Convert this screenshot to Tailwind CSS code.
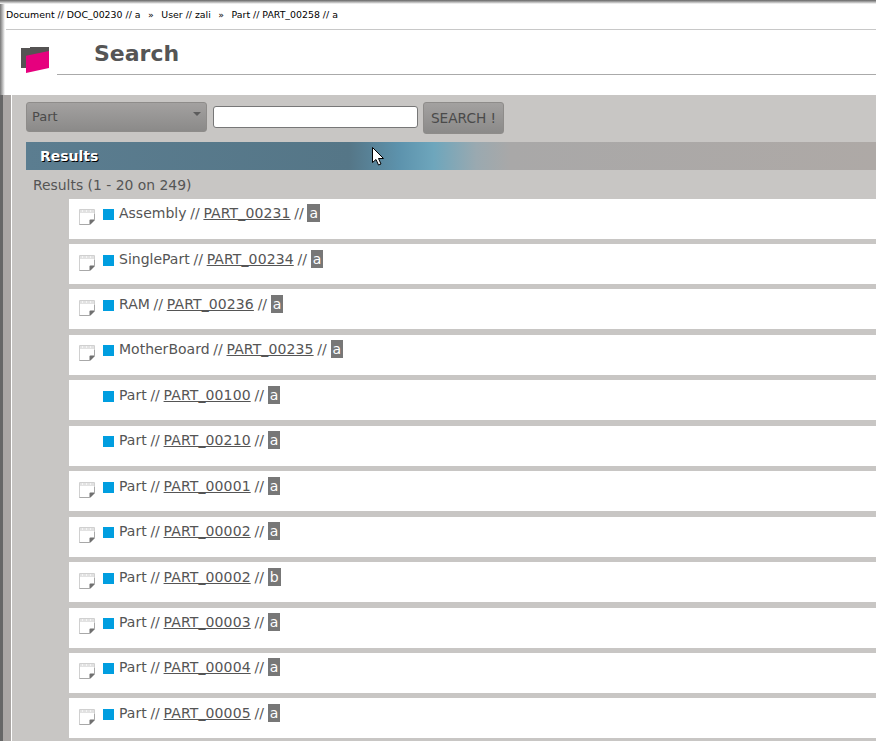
<!DOCTYPE html>
<html lang="en">
<head>
  <meta charset="UTF-8" />
  <title>Search</title>
  <script src="https://cdn.jsdelivr.net/npm/@tailwindcss/browser@4"></script>
</head>
<body class="bg-white font-['DejaVu_Sans',sans-serif] overflow-hidden">
  <div class="relative h-[741px] w-[876px] overflow-hidden">
    <div class="h-[4px] bg-gradient-to-b from-[#666666] to-white"></div>
    <div class="flex">
      <div class="w-[5px] bg-gradient-to-r from-[#777777] to-white"></div>
      <div class="flex-1 min-w-0">
        <!-- breadcrumb -->
        <div class="ml-[1px] flex h-[26px] items-center gap-[7.5px] border-b border-[#c8c8c8] pb-[2px] text-[9.4px] text-black whitespace-nowrap">
          <span>Document // DOC_00230 // a</span><span>»</span><span>User // zali</span><span>»</span><span>Part // PART_00258 // a</span>
        </div>
        <!-- title -->
        <div class="flex h-[65px]">
          <div class="flex w-[52px] pl-[15px] pt-[15px]">
            <svg width="32" height="30" viewBox="0 0 32 30">
              <path d="M1 3h9V2h19v10L6 23H1z" fill="#555353"/>
              <path d="M6 10.700L29 6V23L6 28z" fill="#e6007e"/>
            </svg>
          </div>
          <div class="flex-1">
            <div class="h-[45px] border-b border-[#aaaaaa] pl-[37px] pt-[9px] text-[22px] leading-[30px] font-bold text-[#555555]">Search</div>
          </div>
        </div>
      </div>
    </div>
    <div class="flex h-[646px]">
      <div class="w-[3px] bg-[#666666]"></div>
      <div class="w-[8px] bg-[#aaa6a4]"></div>
      <div class="w-[1px] bg-white"></div>
      <div class="flex-1 min-w-0 bg-[#c8c6c4] pl-[14px] pt-[7px]">
        <!-- search form -->
        <div class="flex items-start">
          <div class="flex h-[30px] w-[181px] items-center justify-between rounded-[3px] border border-[#8e8c8a] bg-gradient-to-b from-[#a3a1a0] to-[#8b8a89] pl-[5px] pr-[5px] text-[13px] text-[#4a4a4a]">
            <span>Part</span>
            <span class="mb-[7px] h-0 w-0 border-x-[4px] border-t-[4px] border-x-transparent border-t-[#5c5c5c]"></span>
          </div>
          <input type="text" class="ml-[6px] mt-[4px] h-[22px] w-[205px] rounded-[3px] border border-[#777777] bg-white" />
          <button class="ml-[5px] h-[32px] w-[81px] rounded-[3px] border border-[#8e8c8a] bg-gradient-to-b from-[#a3a1a0] to-[#8b8a89] text-[13.7px] text-[#4a4a4a]">SEARCH !</button>
        </div>
        <!-- results bar -->
        <div class="mt-[8px] flex h-[28px] items-center bg-[linear-gradient(90deg,#5b7d90_0%,#557687_38%,#5d93ad_44%,#6ea6bc_48%,#9aa9b0_53%,#a9a8a8_57%,#aea9a6_100%)] pl-[14px] text-[14px] font-bold text-white [text-shadow:1px_1px_0_#000]">Results</div>
        <div class="ml-[7px] flex h-[28.6px] items-center pt-[2px] text-[13.9px] text-[#555555]">Results (1 - 20 on 249)</div>
        <!-- result rows -->
        <div class="ml-[43px]">
          <div class="mb-[5.44px] flex h-[40px] bg-white pl-[10px] pt-[5.48px] text-[14px] leading-[18px] text-[#555555] [word-spacing:-0.7px]">
            <span class="mr-[8px] mt-[5px] block h-[16px] w-[16px]"><svg width="16" height="16" viewBox="0 0 16 16"><path d="M0.5 0.500h15v10l-5 5h-10z" fill="#fff" stroke="#d0d0d0"/><path d="M1 1h14v3H1z" fill="#e2e2e2"/><path d="M3 1h1v2H3zM7 1h1v2H7zM11 1h1v2h-1z" fill="#f4f4f4"/><path d="M0.500 15.500h10M15.500 5v5.500" stroke="#a8a8a8" fill="none"/><path d="M15.500 10.500v1l-4 4h-1v-4a1 1 0 0 1 1-1z" fill="#707070"/></svg></span>
            <span class="mr-[5px] mt-[5px] block h-[11px] w-[11px] bg-[#009ee0]"></span>
            <span>Assembly // <u class="tracking-[0.12px]">PART_00231</u> // <span class="inline-block h-[18px] bg-[#777777] px-[2px] text-white">a</span></span>
          </div>
          <div class="mb-[5.44px] flex h-[40px] bg-white pl-[10px] pt-[5.48px] text-[14px] leading-[18px] text-[#555555] [word-spacing:-0.7px]">
            <span class="mr-[8px] mt-[5px] block h-[16px] w-[16px]"><svg width="16" height="16" viewBox="0 0 16 16"><path d="M0.5 0.500h15v10l-5 5h-10z" fill="#fff" stroke="#d0d0d0"/><path d="M1 1h14v3H1z" fill="#e2e2e2"/><path d="M3 1h1v2H3zM7 1h1v2H7zM11 1h1v2h-1z" fill="#f4f4f4"/><path d="M0.500 15.500h10M15.500 5v5.500" stroke="#a8a8a8" fill="none"/><path d="M15.500 10.500v1l-4 4h-1v-4a1 1 0 0 1 1-1z" fill="#707070"/></svg></span>
            <span class="mr-[5px] mt-[5px] block h-[11px] w-[11px] bg-[#009ee0]"></span>
            <span>SinglePart // <u class="tracking-[0.12px]">PART_00234</u> // <span class="inline-block h-[18px] bg-[#777777] px-[2px] text-white">a</span></span>
          </div>
          <div class="mb-[5.44px] flex h-[40px] bg-white pl-[10px] pt-[5.48px] text-[14px] leading-[18px] text-[#555555] [word-spacing:-0.7px]">
            <span class="mr-[8px] mt-[5px] block h-[16px] w-[16px]"><svg width="16" height="16" viewBox="0 0 16 16"><path d="M0.5 0.500h15v10l-5 5h-10z" fill="#fff" stroke="#d0d0d0"/><path d="M1 1h14v3H1z" fill="#e2e2e2"/><path d="M3 1h1v2H3zM7 1h1v2H7zM11 1h1v2h-1z" fill="#f4f4f4"/><path d="M0.500 15.500h10M15.500 5v5.500" stroke="#a8a8a8" fill="none"/><path d="M15.500 10.500v1l-4 4h-1v-4a1 1 0 0 1 1-1z" fill="#707070"/></svg></span>
            <span class="mr-[5px] mt-[5px] block h-[11px] w-[11px] bg-[#009ee0]"></span>
            <span>RAM // <u class="tracking-[0.12px]">PART_00236</u> // <span class="inline-block h-[18px] bg-[#777777] px-[2px] text-white">a</span></span>
          </div>
          <div class="mb-[5.44px] flex h-[40px] bg-white pl-[10px] pt-[5.48px] text-[14px] leading-[18px] text-[#555555] [word-spacing:-0.7px]">
            <span class="mr-[8px] mt-[5px] block h-[16px] w-[16px]"><svg width="16" height="16" viewBox="0 0 16 16"><path d="M0.5 0.500h15v10l-5 5h-10z" fill="#fff" stroke="#d0d0d0"/><path d="M1 1h14v3H1z" fill="#e2e2e2"/><path d="M3 1h1v2H3zM7 1h1v2H7zM11 1h1v2h-1z" fill="#f4f4f4"/><path d="M0.500 15.500h10M15.500 5v5.500" stroke="#a8a8a8" fill="none"/><path d="M15.500 10.500v1l-4 4h-1v-4a1 1 0 0 1 1-1z" fill="#707070"/></svg></span>
            <span class="mr-[5px] mt-[5px] block h-[11px] w-[11px] bg-[#009ee0]"></span>
            <span>MotherBoard // <u class="tracking-[0.12px]">PART_00235</u> // <span class="inline-block h-[18px] bg-[#777777] px-[2px] text-white">a</span></span>
          </div>
          <div class="mb-[5.44px] flex h-[40px] bg-white pl-[10px] pt-[5.48px] text-[14px] leading-[18px] text-[#555555] [word-spacing:-0.7px]">
            <span class="mr-[8px] mt-[5px] block h-[16px] w-[16px]"></span>
            <span class="mr-[5px] mt-[5px] block h-[11px] w-[11px] bg-[#009ee0]"></span>
            <span>Part // <u class="tracking-[0.12px]">PART_00100</u> // <span class="inline-block h-[18px] bg-[#777777] px-[2px] text-white">a</span></span>
          </div>
          <div class="mb-[5.44px] flex h-[40px] bg-white pl-[10px] pt-[5.48px] text-[14px] leading-[18px] text-[#555555] [word-spacing:-0.7px]">
            <span class="mr-[8px] mt-[5px] block h-[16px] w-[16px]"></span>
            <span class="mr-[5px] mt-[5px] block h-[11px] w-[11px] bg-[#009ee0]"></span>
            <span>Part // <u class="tracking-[0.12px]">PART_00210</u> // <span class="inline-block h-[18px] bg-[#777777] px-[2px] text-white">a</span></span>
          </div>
          <div class="mb-[5.44px] flex h-[40px] bg-white pl-[10px] pt-[5.48px] text-[14px] leading-[18px] text-[#555555] [word-spacing:-0.7px]">
            <span class="mr-[8px] mt-[5px] block h-[16px] w-[16px]"><svg width="16" height="16" viewBox="0 0 16 16"><path d="M0.5 0.500h15v10l-5 5h-10z" fill="#fff" stroke="#d0d0d0"/><path d="M1 1h14v3H1z" fill="#e2e2e2"/><path d="M3 1h1v2H3zM7 1h1v2H7zM11 1h1v2h-1z" fill="#f4f4f4"/><path d="M0.500 15.500h10M15.500 5v5.500" stroke="#a8a8a8" fill="none"/><path d="M15.500 10.500v1l-4 4h-1v-4a1 1 0 0 1 1-1z" fill="#707070"/></svg></span>
            <span class="mr-[5px] mt-[5px] block h-[11px] w-[11px] bg-[#009ee0]"></span>
            <span>Part // <u class="tracking-[0.12px]">PART_00001</u> // <span class="inline-block h-[18px] bg-[#777777] px-[2px] text-white">a</span></span>
          </div>
          <div class="mb-[5.44px] flex h-[40px] bg-white pl-[10px] pt-[5.48px] text-[14px] leading-[18px] text-[#555555] [word-spacing:-0.7px]">
            <span class="mr-[8px] mt-[5px] block h-[16px] w-[16px]"><svg width="16" height="16" viewBox="0 0 16 16"><path d="M0.5 0.500h15v10l-5 5h-10z" fill="#fff" stroke="#d0d0d0"/><path d="M1 1h14v3H1z" fill="#e2e2e2"/><path d="M3 1h1v2H3zM7 1h1v2H7zM11 1h1v2h-1z" fill="#f4f4f4"/><path d="M0.500 15.500h10M15.500 5v5.500" stroke="#a8a8a8" fill="none"/><path d="M15.500 10.500v1l-4 4h-1v-4a1 1 0 0 1 1-1z" fill="#707070"/></svg></span>
            <span class="mr-[5px] mt-[5px] block h-[11px] w-[11px] bg-[#009ee0]"></span>
            <span>Part // <u class="tracking-[0.12px]">PART_00002</u> // <span class="inline-block h-[18px] bg-[#777777] px-[2px] text-white">a</span></span>
          </div>
          <div class="mb-[5.44px] flex h-[40px] bg-white pl-[10px] pt-[5.48px] text-[14px] leading-[18px] text-[#555555] [word-spacing:-0.7px]">
            <span class="mr-[8px] mt-[5px] block h-[16px] w-[16px]"><svg width="16" height="16" viewBox="0 0 16 16"><path d="M0.5 0.500h15v10l-5 5h-10z" fill="#fff" stroke="#d0d0d0"/><path d="M1 1h14v3H1z" fill="#e2e2e2"/><path d="M3 1h1v2H3zM7 1h1v2H7zM11 1h1v2h-1z" fill="#f4f4f4"/><path d="M0.500 15.500h10M15.500 5v5.500" stroke="#a8a8a8" fill="none"/><path d="M15.500 10.500v1l-4 4h-1v-4a1 1 0 0 1 1-1z" fill="#707070"/></svg></span>
            <span class="mr-[5px] mt-[5px] block h-[11px] w-[11px] bg-[#009ee0]"></span>
            <span>Part // <u class="tracking-[0.12px]">PART_00002</u> // <span class="inline-block h-[18px] bg-[#777777] px-[2px] text-white">b</span></span>
          </div>
          <div class="mb-[5.44px] flex h-[40px] bg-white pl-[10px] pt-[5.48px] text-[14px] leading-[18px] text-[#555555] [word-spacing:-0.7px]">
            <span class="mr-[8px] mt-[5px] block h-[16px] w-[16px]"><svg width="16" height="16" viewBox="0 0 16 16"><path d="M0.5 0.500h15v10l-5 5h-10z" fill="#fff" stroke="#d0d0d0"/><path d="M1 1h14v3H1z" fill="#e2e2e2"/><path d="M3 1h1v2H3zM7 1h1v2H7zM11 1h1v2h-1z" fill="#f4f4f4"/><path d="M0.500 15.500h10M15.500 5v5.500" stroke="#a8a8a8" fill="none"/><path d="M15.500 10.500v1l-4 4h-1v-4a1 1 0 0 1 1-1z" fill="#707070"/></svg></span>
            <span class="mr-[5px] mt-[5px] block h-[11px] w-[11px] bg-[#009ee0]"></span>
            <span>Part // <u class="tracking-[0.12px]">PART_00003</u> // <span class="inline-block h-[18px] bg-[#777777] px-[2px] text-white">a</span></span>
          </div>
          <div class="mb-[5.44px] flex h-[40px] bg-white pl-[10px] pt-[5.48px] text-[14px] leading-[18px] text-[#555555] [word-spacing:-0.7px]">
            <span class="mr-[8px] mt-[5px] block h-[16px] w-[16px]"><svg width="16" height="16" viewBox="0 0 16 16"><path d="M0.5 0.500h15v10l-5 5h-10z" fill="#fff" stroke="#d0d0d0"/><path d="M1 1h14v3H1z" fill="#e2e2e2"/><path d="M3 1h1v2H3zM7 1h1v2H7zM11 1h1v2h-1z" fill="#f4f4f4"/><path d="M0.500 15.500h10M15.500 5v5.500" stroke="#a8a8a8" fill="none"/><path d="M15.500 10.500v1l-4 4h-1v-4a1 1 0 0 1 1-1z" fill="#707070"/></svg></span>
            <span class="mr-[5px] mt-[5px] block h-[11px] w-[11px] bg-[#009ee0]"></span>
            <span>Part // <u class="tracking-[0.12px]">PART_00004</u> // <span class="inline-block h-[18px] bg-[#777777] px-[2px] text-white">a</span></span>
          </div>
          <div class="mb-[5.44px] flex h-[40px] bg-white pl-[10px] pt-[5.48px] text-[14px] leading-[18px] text-[#555555] [word-spacing:-0.7px]">
            <span class="mr-[8px] mt-[5px] block h-[16px] w-[16px]"><svg width="16" height="16" viewBox="0 0 16 16"><path d="M0.5 0.500h15v10l-5 5h-10z" fill="#fff" stroke="#d0d0d0"/><path d="M1 1h14v3H1z" fill="#e2e2e2"/><path d="M3 1h1v2H3zM7 1h1v2H7zM11 1h1v2h-1z" fill="#f4f4f4"/><path d="M0.500 15.500h10M15.500 5v5.500" stroke="#a8a8a8" fill="none"/><path d="M15.500 10.500v1l-4 4h-1v-4a1 1 0 0 1 1-1z" fill="#707070"/></svg></span>
            <span class="mr-[5px] mt-[5px] block h-[11px] w-[11px] bg-[#009ee0]"></span>
            <span>Part // <u class="tracking-[0.12px]">PART_00005</u> // <span class="inline-block h-[18px] bg-[#777777] px-[2px] text-white">a</span></span>
          </div>
        </div>
      </div>
    </div>
    <!-- mouse pointer in the screenshot -->
    <svg class="absolute left-[372px] top-[147px]" width="13" height="19" viewBox="0 0 13 19"><path d="M0.5 0.5v15l3.500-3 2.500 5.500 2.500-1-2.500-5.500h5z" fill="#fff" stroke="#000"/></svg>
  </div>
</body>
</html>
